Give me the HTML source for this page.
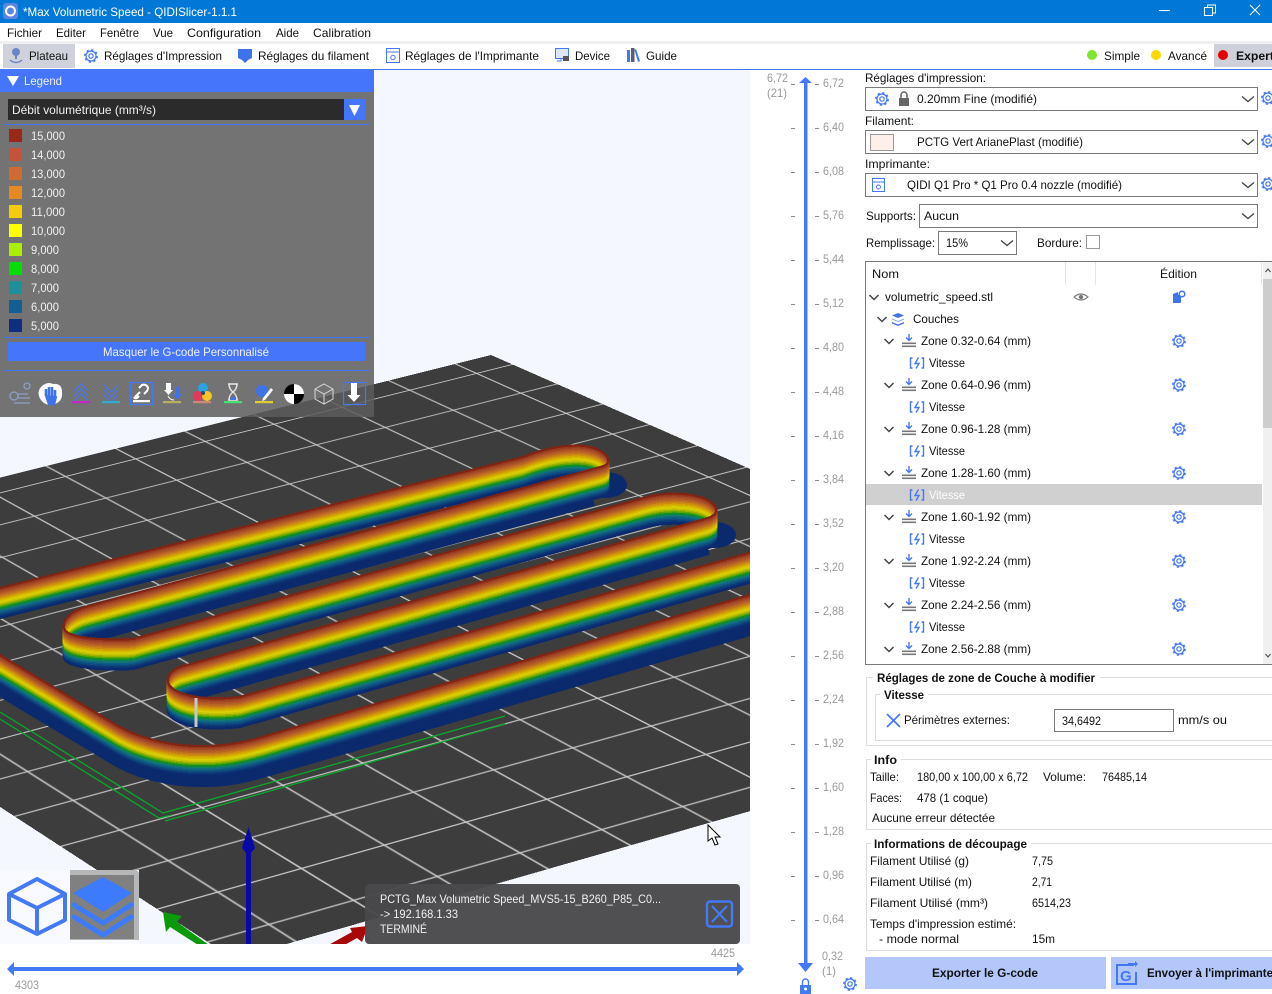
<!DOCTYPE html>
<html lang="fr"><head><meta charset="utf-8"><title>Max Volumetric Speed - QIDISlicer</title>
<style>
html,body{margin:0;padding:0;background:#fff;width:1272px;height:994px;overflow:hidden}
#scene{position:absolute;left:0;top:70px;width:750px;height:874px;overflow:hidden;background:#f4f7fe}
#bed{position:absolute;left:0;top:-70px;width:1000px;height:1000px;transform-origin:0 0;
transform:matrix3d(.5273,.2088,0,-.00016603,-.8363,.1819,0,-.00005645,0,0,1,0,491,355,0,1);
background-color:#3d3d3d;
background-image:linear-gradient(90deg,#cacaca 1.8px,transparent 1.8px),linear-gradient(#cacaca 1.8px,transparent 1.8px);
background-size:71.43px 81.6px;background-position:34px 43px}
svg#m{position:absolute;left:0;top:0}
text{font-family:"Liberation Sans",sans-serif;font-size:12px;fill:#111}
.b{font-weight:bold}.w{fill:#f0f0f0}.g{fill:#9a9a9a}
</style></head><body>
<div id="scene"><div id="bed"></div></div>
<svg id="m" width="1272" height="994" viewBox="0 0 1272 994" xmlns="http://www.w3.org/2000/svg">
<defs>
<clipPath id="cv"><rect x="0" y="70" width="750" height="874"/></clipPath>
<path id="w" fill="none" stroke-width="2.2" d="M-20,593 L523,457 C543,449 565,444 585,446 C600,448 610,456 608,462 C607,466 600,467 593,469 L85,607 C70,612 62,620 64,628 C66,636 90,641 133,639 L647,497 C670,491 700,493 712,503 C720,510 716,515 708,518 L180,667 C170,671 167,677 168,682 C170,692 195,702 240,697 L770,547 M-20,643 L113,723 C135,737 170,747 205,746 C225,746 245,742 262,737 L770,589"/>
<g id="g" fill="none" stroke="#4479f5"><circle r="5" stroke-width="1.2"/><circle r="2.2" stroke-width="1.2"/><circle r="6" stroke-width="1.8" stroke-dasharray="2.2 2.51"/></g>
<g id="z"><path d="M0,-7V-1M-3,-3.5L0,-.5L3,-3.5" stroke="#4479f5" stroke-width="1.4" fill="none"/><rect x="-7" y="1.5" width="14" height="1.6" fill="#777"/><rect x="-7" y="4.5" width="14" height="1.6" fill="#777"/></g>
<g id="v" fill="none" stroke="#4479f5" stroke-width="1.4"><path d="M-4.5,-5H-6.5V5H-4.5M4.5,-5H6.5V5H4.5"/><path d="M1.5,-5.5L-2,.5H2L-1,5.5"/></g>
<path id="c" d="M-4.5,-2L0,2.5L4.5,-2" fill="none" stroke="#444" stroke-width="1.5"/>
<path id="d" d="M-6,-2.5L0,2.5L6,-2.5" fill="none" stroke="#444" stroke-width="1.4"/>
</defs>

<!-- title bar -->
<rect width="1272" height="23" fill="#0078d7"/>
<rect x="3" y="3" width="15" height="16" rx="3" fill="#5b86e0"/><circle cx="10.5" cy="11" r="4.5" fill="none" stroke="#fff" stroke-width="2"/>
<text x="23" y="16" textLength="214" lengthAdjust="spacingAndGlyphs" style="fill:#fff">*Max Volumetric Speed - QIDISlicer-1.1.1</text>
<path d="M1159,10.5H1170" stroke="#fff"/><path d="M1204.5,7.5h8v8h-8zM1207.5,7.5v-2.5h8v8h-3" fill="none" stroke="#fff"/><path d="M1250,5L1260,15M1260,5L1250,15" stroke="#fff" stroke-width="1.1"/>

<!-- menu -->
<g>
<text x="7" y="37" textLength="35" lengthAdjust="spacingAndGlyphs">Fichier</text>
<text x="56" y="37" textLength="30" lengthAdjust="spacingAndGlyphs">Editer</text>
<text x="100" y="37" textLength="39" lengthAdjust="spacingAndGlyphs">Fenêtre</text>
<text x="153" y="37" textLength="20" lengthAdjust="spacingAndGlyphs">Vue</text>
<text x="187" y="37" textLength="74" lengthAdjust="spacingAndGlyphs">Configuration</text>
<text x="276" y="37" textLength="23" lengthAdjust="spacingAndGlyphs">Aide</text>
<text x="313" y="37" textLength="58" lengthAdjust="spacingAndGlyphs">Calibration</text>
</g>
<rect x="0" y="41" width="1272" height="3" fill="#f0f0f0"/>

<!-- toolbar -->
<rect x="3" y="44" width="72" height="24" fill="#cfd2db"/>
<rect x="1214" y="44" width="58" height="23" fill="#cfd1da"/>
<rect x="0" y="69" width="1272" height="1" fill="#4479f5"/>
<g fill="#6b86c8"><circle cx="16" cy="52" r="4"/><path d="M10,60q6,5 12,0" fill="none" stroke="#6b86c8" stroke-width="1.4"/><rect x="15" y="54" width="2" height="5"/></g>
<use href="#g" x="91" y="56"/>
<path d="M238,49h14v9l-4,2l-3,3l-3,-3l-4,-2z" fill="#3f73ea"/>
<g fill="none" stroke="#4479f5"><rect x="386.5" y="48.5" width="13" height="14"/><path d="M386.5,52h13"/><circle cx="393" cy="57.5" r="2.2"/></g>
<g><rect x="555.5" y="48.5" width="13" height="10" fill="#dde6fb" stroke="#4479f5"/><path d="M561,59v2h-4" stroke="#4479f5" fill="none"/><rect x="563" y="56" width="6" height="5" fill="#555"/></g>
<g fill="#4479f5"><rect x="627" y="50" width="3" height="12"/><rect x="631" y="48" width="3.5" height="14" fill="#5a5f70"/><path d="M636,49l4,12l-2,1l-3.5,-12z"/></g>
<g>
<text x="29" y="60" textLength="39" lengthAdjust="spacingAndGlyphs">Plateau</text>
<text x="104" y="60" textLength="118" lengthAdjust="spacingAndGlyphs">Réglages d'Impression</text>
<text x="258" y="60" textLength="111" lengthAdjust="spacingAndGlyphs">Réglages du filament</text>
<text x="405" y="60" textLength="134" lengthAdjust="spacingAndGlyphs">Réglages de l'Imprimante</text>
<text x="575" y="60" textLength="35" lengthAdjust="spacingAndGlyphs">Device</text>
<text x="646" y="60" textLength="31" lengthAdjust="spacingAndGlyphs">Guide</text>
<text x="1104" y="60" textLength="36" lengthAdjust="spacingAndGlyphs">Simple</text>
<text x="1168" y="60" textLength="39" lengthAdjust="spacingAndGlyphs">Avancé</text>
<text x="1236" y="60" class="b" textLength="38" lengthAdjust="spacingAndGlyphs">Expert</text>
</g>
<circle cx="1092" cy="55" r="5" fill="#7fe62d"/><circle cx="1156" cy="55" r="5" fill="#ffd800"/><circle cx="1223" cy="55" r="5" fill="#e60000"/>

<!-- 3D scene -->
<g clip-path="url(#cv)">
<g fill="none" stroke="#0aa82a" stroke-width="1.3">
<path d="M0,712L163,813L505,716"/><path d="M0,719L159,818L172,815"/><path d="M165,821L505,724"/>
</g>
<g fill="#0b2a6e"><ellipse cx="606" cy="485" rx="21" ry="13"/><ellipse cx="715" cy="535" rx="21" ry="13"/></g>
<g fill="none" stroke="#0b2a6e" stroke-width="14">
<path d="M593,499L85,637"/><path d="M708,548L180,697"/>
<path d="M-20,677 L113,757 C135,771 170,781 205,780 C225,780 245,776 262,771 L770,623"/>
</g>
<g shape-rendering="crispEdges">
<use href="#w" y="30" stroke="#0b2a6e"/><use href="#w" y="28.5" stroke="#0b2c70"/><use href="#w" y="27" stroke="#0c3a78"/><use href="#w" y="25.5" stroke="#0e4c80"/><use href="#w" y="24" stroke="#0f5c82"/><use href="#w" y="22.5" stroke="#117080"/><use href="#w" y="21" stroke="#0f8058"/><use href="#w" y="19.5" stroke="#109020"/><use href="#w" y="18" stroke="#5aa408"/><use href="#w" y="16.5" stroke="#9cb400"/><use href="#w" y="15" stroke="#c8c400"/><use href="#w" y="13.5" stroke="#d8d000"/><use href="#w" y="12" stroke="#d8bc00"/><use href="#w" y="10.5" stroke="#d4a400"/><use href="#w" y="9" stroke="#cc8c10"/><use href="#w" y="7.5" stroke="#c4761c"/><use href="#w" y="6" stroke="#b86424"/><use href="#w" y="4.5" stroke="#ae5628"/><use href="#w" y="3" stroke="#a44828"/><use href="#w" y="1.5" stroke="#983a20"/><use href="#w" y="0" stroke="#802414"/>
</g>
<rect x="194.5" y="698" width="3" height="29" fill="#c8c8c8"/>
<path d="M246,850h5v94h-5z M248.5,827L255,848L251,853H246L242,848Z" fill="#0808a8"/>
<path d="M163,912L182,916L177,922L216,950L206,950L170,927L166,932Z" fill="#0a9a0a"/>
<path d="M323,948L352,932L350,928L368,926L362,942L357,938L332,952Z" fill="#a80808"/>
<path d="M708,825V841L712,838L715,845L718,844L715,837L720,837Z" fill="#fff" stroke="#000" stroke-width="1"/>

<!-- bottom-left view icons -->
<rect x="0" y="870" width="139" height="74" fill="#f8faff"/>
<path d="M70,870h65a4,4 0 0 1 4,4v66h-69z" fill="#a0a0a0" opacity=".75"/>
<rect x="70" y="875" width="64" height="64" fill="#808080"/>
<path d="M37,879L65,894V920L37,934L9,920V894ZM9,894L37,908L65,894M37,908V934" fill="none" stroke="#4479f5" stroke-width="4" stroke-linejoin="round"/>
<path d="M103,877L132,893L103,912L73,893Z" fill="#3b7bfc"/>
<path d="M74,905L103,923L131,905" fill="none" stroke="#3b7bfc" stroke-width="5" stroke-linecap="round" stroke-linejoin="round"/>
<path d="M74,917L103,935L131,917" fill="none" stroke="#3b7bfc" stroke-width="5" stroke-linecap="round" stroke-linejoin="round"/>

<!-- tooltip -->
<rect x="365" y="884" width="375" height="60" rx="4" fill="#49494c" fill-opacity=".96"/>
<text x="380" y="903" class="w" textLength="281" lengthAdjust="spacingAndGlyphs">PCTG_Max Volumetric Speed_MVS5-15_B260_P85_C0...</text>
<text x="380" y="918" class="w" textLength="78" lengthAdjust="spacingAndGlyphs">-&gt; 192.168.1.33</text>
<text x="380" y="933" class="w" textLength="47" lengthAdjust="spacingAndGlyphs">TERMINÉ</text>
<rect x="707" y="901.5" width="25" height="25" rx="3" fill="none" stroke="#4479f5" stroke-width="2.4"/>
<path d="M712,906L727,922M727,906L712,922" stroke="#4479f5" stroke-width="2.2"/>
</g>

<!-- Legend panel -->
<rect x="0" y="70" width="374" height="347" fill="#5c5c5c" fill-opacity=".85"/>
<rect x="0" y="70" width="374" height="22" fill="#4575fb"/>
<path d="M7,76H19L13,86Z" fill="#fff"/>
<text x="24" y="85" class="w" textLength="38" lengthAdjust="spacingAndGlyphs">Legend</text>
<rect x="8" y="99" width="357" height="21" fill="#2b2b2b"/>
<rect x="344" y="99" width="21" height="21" fill="#4575fb"/>
<path d="M349,105H360L354.500,116Z" fill="#fff"/>
<text x="12" y="114" class="w" textLength="144" lengthAdjust="spacingAndGlyphs">Débit volumétrique (mm³/s)</text>
<rect x="4" y="124" width="366" height="1" fill="#4575fb"/>
<g>
<rect x="9" y="129" width="13" height="13" fill="#98281a"/><rect x="9" y="148" width="13" height="13" fill="#c3533b"/><rect x="9" y="167" width="13" height="13" fill="#cf6b30"/><rect x="9" y="186" width="13" height="13" fill="#e58a20"/><rect x="9" y="205" width="13" height="13" fill="#f5cc0a"/><rect x="9" y="224" width="13" height="13" fill="#ffff00"/><rect x="9" y="243" width="13" height="13" fill="#aaf000"/><rect x="9" y="262" width="13" height="13" fill="#06dc06"/><rect x="9" y="281" width="13" height="13" fill="#1f8f9a"/><rect x="9" y="300" width="13" height="13" fill="#135f93"/><rect x="9" y="319" width="13" height="13" fill="#0f2e80"/>
</g>
<g>
<text x="31" y="140" class="w" textLength="34" lengthAdjust="spacingAndGlyphs">15,000</text>
<text x="31" y="159" class="w" textLength="34" lengthAdjust="spacingAndGlyphs">14,000</text>
<text x="31" y="178" class="w" textLength="34" lengthAdjust="spacingAndGlyphs">13,000</text>
<text x="31" y="197" class="w" textLength="34" lengthAdjust="spacingAndGlyphs">12,000</text>
<text x="31" y="216" class="w" textLength="34" lengthAdjust="spacingAndGlyphs">11,000</text>
<text x="31" y="235" class="w" textLength="34" lengthAdjust="spacingAndGlyphs">10,000</text>
<text x="31" y="254" class="w" textLength="28" lengthAdjust="spacingAndGlyphs">9,000</text>
<text x="31" y="273" class="w" textLength="28" lengthAdjust="spacingAndGlyphs">8,000</text>
<text x="31" y="292" class="w" textLength="28" lengthAdjust="spacingAndGlyphs">7,000</text>
<text x="31" y="311" class="w" textLength="28" lengthAdjust="spacingAndGlyphs">6,000</text>
<text x="31" y="330" class="w" textLength="28" lengthAdjust="spacingAndGlyphs">5,000</text>
</g>
<rect x="4" y="337" width="366" height="1" fill="#4575fb"/>
<rect x="8" y="342" width="357" height="19" fill="#4575fb"/>
<text x="103" y="356" class="w" textLength="166" lengthAdjust="spacingAndGlyphs">Masquer le G-code Personnalisé</text>
<rect x="4" y="370" width="366" height="1" fill="#4575fb"/>

<!-- legend toolbar icons -->
<g>
<g fill="none" stroke="#8d9fc8" stroke-width="1.3"><circle cx="14" cy="396" r="4"/><circle cx="27" cy="386" r="3"/><path d="M18,394h10M18,398h12M14,403h16"/></g>
<path d="M41,387q6,-6 12,-3q9,-1 9,8q1,9 -7,12q-9,3 -14,-4q-5,-7 0,-13z" fill="#fff"/><path d="M46,389v7M49,387v10M52,387v10M55,390v7M46,395l3,9h5l2,-8" stroke="#3f73ea" stroke-width="2.6" fill="#3f73ea"/>
<path d="M74,391l7,-7l7,7M74,396l7,-7l7,7M74,401l7,-7l7,7" fill="none" stroke="#4479f5" stroke-width="1.2"/><rect x="72" y="401" width="18" height="2.200" fill="#c22bc8"/>
<path d="M104,385l7,7l7,-7M104,390l7,7l7,-7M104,395l7,7l7,-7" fill="none" stroke="#4479f5" stroke-width="1.2"/><rect x="102" y="401" width="18" height="2.200" fill="#33aacc"/>
<rect x="130.500" y="382.500" width="22" height="22" fill="none" stroke="#4479f5" stroke-width="1.2"/><path d="M135,397l5,-5M139,388l3,-3q3,-1 5,1q2,2 0,5l-3,3M139,396l-2,2q-2,1 -3,-1" fill="none" stroke="#fff" stroke-width="2"/><rect x="133" y="400" width="17" height="2.200" fill="#fff"/>
<path d="M166,383h5v7h2l-4.500,5l-4.500,-5h2z" fill="#fff"/><path d="M175,387h5v7h2l-4.500,6l-4.500,-6h2z" fill="#3f73ea"/><path d="M168,396q2,4 6,4" stroke="#fff" fill="none"/><rect x="163" y="401" width="18" height="2.200" fill="#b8b060"/>
<circle cx="203" cy="388" r="5" fill="#2aa3e0"/><circle cx="198" cy="396" r="5" fill="#e8385a"/><circle cx="207" cy="396" r="5" fill="#f7c52a"/><circle cx="203" cy="393" r="2" fill="#24506a"/><rect x="193" y="401" width="18" height="2.200" fill="#d08878"/>
<path d="M228,384h10M228,400h10M229,384q0,5 4,8q-4,3 -4,8M237,384q0,5 -4,8q4,3 4,8" fill="none" stroke="#e8e8e8" stroke-width="1.400"/><path d="M231,397h4l1,3h-6z" fill="#3f73ea"/><rect x="224" y="401" width="18" height="2.200" fill="#46e070"/>
<circle cx="262" cy="391" r="6" fill="#3f73ea"/><path d="M263,398l8,-10l2,2l-8,10l-3,1z" fill="#fff"/><rect x="255" y="401" width="18" height="2.200" fill="#e0cc30"/>
<circle cx="294" cy="394" r="10" fill="#000"/><path d="M294,384a10,10 0 0 1 10,10h-10zM294,394h-10a10,10 0 0 0 10,10z" fill="#fff"/>
<path d="M324,384l9,5v10l-9,5l-9,-5v-10zM315,389l9,5l9,-5M324,394v10" fill="none" stroke="#d8d8d8" stroke-width="1"/>
<rect x="343.500" y="382.500" width="22" height="22" fill="none" stroke="#4479f5" stroke-width="1.200"/><path d="M351,383h6v12h3.500l-6.500,7l-6.500,-7h3.500z" fill="#fff"/>
</g>

<!-- timeline -->
<rect x="9" y="967" width="733" height="4" fill="#4479f5"/>
<path d="M14,962V976L7,969ZM737,962V976L744,969Z" fill="#4479f5"/>
<text x="711" y="957" class="g" textLength="24" lengthAdjust="spacingAndGlyphs">4425</text>
<text x="15" y="989" class="g" textLength="24" lengthAdjust="spacingAndGlyphs">4303</text>

<!-- vertical slider -->
<rect x="804" y="80" width="3.500" height="888" fill="#4479f5"/>
<path d="M805.500,77L812,83H799Z" fill="#4479f5"/>
<path d="M798,963H813L805.500,972Z" fill="#4479f5"/>
<path d="M800,985h11v9h-11z" fill="#4479f5"/><path d="M802.500,985v-3a3,3 0 0 1 6,0v3" fill="none" stroke="#4479f5" stroke-width="1.400"/><circle cx="805.500" cy="989" r="1.500" fill="#fff"/>
<use href="#g" x="850" y="984"/>
<g fill="#8a8a8a">
<rect x="791" y="84" width="4" height="1"/><rect x="791" y="128" width="4" height="1"/><rect x="791" y="172" width="4" height="1"/><rect x="791" y="216" width="4" height="1"/><rect x="791" y="260" width="4" height="1"/><rect x="791" y="304" width="4" height="1"/><rect x="791" y="348" width="4" height="1"/><rect x="791" y="392" width="4" height="1"/><rect x="791" y="436" width="4" height="1"/><rect x="791" y="480" width="4" height="1"/><rect x="791" y="524" width="4" height="1"/><rect x="791" y="568" width="4" height="1"/><rect x="791" y="612" width="4" height="1"/><rect x="791" y="656" width="4" height="1"/><rect x="791" y="700" width="4" height="1"/><rect x="791" y="744" width="4" height="1"/><rect x="791" y="788" width="4" height="1"/><rect x="791" y="832" width="4" height="1"/><rect x="791" y="876" width="4" height="1"/><rect x="791" y="920" width="4" height="1"/>
<rect x="815" y="84" width="4" height="1"/><rect x="815" y="128" width="4" height="1"/><rect x="815" y="172" width="4" height="1"/><rect x="815" y="216" width="4" height="1"/><rect x="815" y="260" width="4" height="1"/><rect x="815" y="304" width="4" height="1"/><rect x="815" y="348" width="4" height="1"/><rect x="815" y="392" width="4" height="1"/><rect x="815" y="436" width="4" height="1"/><rect x="815" y="480" width="4" height="1"/><rect x="815" y="524" width="4" height="1"/><rect x="815" y="568" width="4" height="1"/><rect x="815" y="612" width="4" height="1"/><rect x="815" y="656" width="4" height="1"/><rect x="815" y="700" width="4" height="1"/><rect x="815" y="744" width="4" height="1"/><rect x="815" y="788" width="4" height="1"/><rect x="815" y="832" width="4" height="1"/><rect x="815" y="876" width="4" height="1"/><rect x="815" y="920" width="4" height="1"/>
</g>
<g>
<text x="767" y="82" class="g" textLength="21" lengthAdjust="spacingAndGlyphs">6,72</text>
<text x="767" y="97" class="g" textLength="20" lengthAdjust="spacingAndGlyphs">(21)</text>
<text x="823" y="87" class="g" textLength="21" lengthAdjust="spacingAndGlyphs">6,72</text>
<text x="823" y="131" class="g" textLength="21" lengthAdjust="spacingAndGlyphs">6,40</text>
<text x="823" y="175" class="g" textLength="21" lengthAdjust="spacingAndGlyphs">6,08</text>
<text x="823" y="219" class="g" textLength="21" lengthAdjust="spacingAndGlyphs">5,76</text>
<text x="823" y="263" class="g" textLength="21" lengthAdjust="spacingAndGlyphs">5,44</text>
<text x="823" y="307" class="g" textLength="21" lengthAdjust="spacingAndGlyphs">5,12</text>
<text x="823" y="351" class="g" textLength="21" lengthAdjust="spacingAndGlyphs">4,80</text>
<text x="823" y="395" class="g" textLength="21" lengthAdjust="spacingAndGlyphs">4,48</text>
<text x="823" y="439" class="g" textLength="21" lengthAdjust="spacingAndGlyphs">4,16</text>
<text x="823" y="483" class="g" textLength="21" lengthAdjust="spacingAndGlyphs">3,84</text>
<text x="823" y="527" class="g" textLength="21" lengthAdjust="spacingAndGlyphs">3,52</text>
<text x="823" y="571" class="g" textLength="21" lengthAdjust="spacingAndGlyphs">3,20</text>
<text x="823" y="615" class="g" textLength="21" lengthAdjust="spacingAndGlyphs">2,88</text>
<text x="823" y="659" class="g" textLength="21" lengthAdjust="spacingAndGlyphs">2,56</text>
<text x="823" y="703" class="g" textLength="21" lengthAdjust="spacingAndGlyphs">2,24</text>
<text x="823" y="747" class="g" textLength="21" lengthAdjust="spacingAndGlyphs">1,92</text>
<text x="823" y="791" class="g" textLength="21" lengthAdjust="spacingAndGlyphs">1,60</text>
<text x="823" y="835" class="g" textLength="21" lengthAdjust="spacingAndGlyphs">1,28</text>
<text x="823" y="879" class="g" textLength="21" lengthAdjust="spacingAndGlyphs">0,96</text>
<text x="823" y="923" class="g" textLength="21" lengthAdjust="spacingAndGlyphs">0,64</text>
<text x="822" y="960" class="g" textLength="21" lengthAdjust="spacingAndGlyphs">0,32</text>
<text x="822" y="975" class="g" textLength="14" lengthAdjust="spacingAndGlyphs">(1)</text>
</g>

<!-- right panel -->
<g fill="#fff" stroke="#7a7a7a">
<rect x="865.500" y="87.500" width="392" height="23"/>
<rect x="865.500" y="130.500" width="392" height="23"/>
<rect x="865.500" y="173.500" width="392" height="23"/>
<rect x="919.500" y="204.500" width="338" height="23"/>
<rect x="938.500" y="231.500" width="78" height="23"/>
<rect x="1086.500" y="235.500" width="13" height="13" stroke="#999"/>
<rect x="870.500" y="134.500" width="23" height="16" fill="#fdf0ea" stroke="#999"/>
</g>
<text x="865" y="82" textLength="121" lengthAdjust="spacingAndGlyphs">Réglages d'impression:</text>
<use href="#g" x="882" y="99"/>
<rect x="899" y="98" width="10" height="8" fill="#666"/><path d="M901,98v-3a3,3 0 0 1 6,0v3" fill="none" stroke="#666" stroke-width="1.500"/>
<text x="917" y="103" textLength="120" lengthAdjust="spacingAndGlyphs">0.20mm Fine (modifié)</text>
<text x="865" y="125" textLength="49" lengthAdjust="spacingAndGlyphs">Filament:</text>
<text x="917" y="146" textLength="166" lengthAdjust="spacingAndGlyphs">PCTG Vert ArianePlast (modifié)</text>
<text x="865" y="168" textLength="65" lengthAdjust="spacingAndGlyphs">Imprimante:</text>
<g fill="none" stroke="#4479f5"><rect x="872.500" y="178.500" width="12" height="13"/><path d="M872.500,182h12"/><circle cx="878.500" cy="187" r="2"/></g>
<text x="907" y="189" textLength="215" lengthAdjust="spacingAndGlyphs">QIDI Q1 Pro * Q1 Pro 0.4 nozzle (modifié)</text>
<use href="#g" x="1268" y="98"/><use href="#g" x="1268" y="141"/><use href="#g" x="1268" y="184"/>
<use href="#d" x="1248" y="99"/><use href="#d" x="1248" y="142"/><use href="#d" x="1248" y="185"/><use href="#d" x="1248" y="216"/><use href="#d" x="1007" y="243"/>
<text x="866" y="220" textLength="50" lengthAdjust="spacingAndGlyphs">Supports:</text>
<text x="924" y="220" textLength="35" lengthAdjust="spacingAndGlyphs">Aucun</text>
<text x="866" y="247" textLength="69" lengthAdjust="spacingAndGlyphs">Remplissage:</text>
<text x="946" y="247" textLength="22" lengthAdjust="spacingAndGlyphs">15%</text>
<text x="1037" y="247" textLength="45" lengthAdjust="spacingAndGlyphs">Bordure:</text>

<!-- tree -->
<path d="M865.500,665V261.500H1272M865.500,664.500H1272" fill="none" stroke="#7a7a7a"/>
<path d="M1065.500,262V285M1095.500,262V285M1261.500,262V285" stroke="#e4e4e4"/>
<rect x="1263" y="262" width="9" height="402" fill="#f0f0f0"/>
<rect x="1263" y="279" width="9" height="149" fill="#cdcdcd"/>
<path d="M1265.500,272l2.500,-3l2.500,3M1265.500,654l2.500,3l2.500,-3" fill="none" stroke="#555" stroke-width="1.200"/>
<text x="872" y="278" textLength="27" lengthAdjust="spacingAndGlyphs">Nom</text>
<text x="1160" y="278" textLength="37" lengthAdjust="spacingAndGlyphs">Édition</text>
<rect x="866" y="484" width="396" height="21" fill="#d0d0d0"/>
<use href="#c" x="874" y="297"/>
<text x="885" y="301" textLength="108" lengthAdjust="spacingAndGlyphs">volumetric_speed.stl</text>
<path d="M1074,297q7,-6 14,0q-7,6 -14,0z" fill="none" stroke="#777" stroke-width="1.100"/><circle cx="1081" cy="297" r="2.200" fill="#777"/>
<path d="M1173,294l5,-2v3h3v7a1,1 0 0 1 -1,1h-7z" fill="#3f73ea"/><circle cx="1182" cy="294" r="2.800" fill="#fff" stroke="#3f73ea" stroke-width="1.500"/>
<use href="#c" x="882" y="319"/>
<g fill="#3f73ea"><path d="M898,313l6,2.500l-6,2.500l-6,-2.500z"/><path d="M892,318.500l6,2.500l6,-2.500v1l-6,2.500l-6,-2.500z" fill="#7da0ef"/><path d="M892,322l6,2.500l6,-2.500v1.500l-6,2.500l-6,-2.500z"/></g>
<text x="913" y="323" textLength="46" lengthAdjust="spacingAndGlyphs">Couches</text>

<use href="#c" x="889" y="341"/><use href="#z" x="909" y="341"/><use href="#g" x="1179" y="341"/><text x="921" y="345" textLength="110" lengthAdjust="spacingAndGlyphs">Zone 0.32-0.64 (mm)</text>
<use href="#v" x="917" y="363"/><text x="929" y="367" textLength="36" lengthAdjust="spacingAndGlyphs">Vitesse</text>
<use href="#c" x="889" y="385"/><use href="#z" x="909" y="385"/><use href="#g" x="1179" y="385"/><text x="921" y="389" textLength="110" lengthAdjust="spacingAndGlyphs">Zone 0.64-0.96 (mm)</text>
<use href="#v" x="917" y="407"/><text x="929" y="411" textLength="36" lengthAdjust="spacingAndGlyphs">Vitesse</text>
<use href="#c" x="889" y="429"/><use href="#z" x="909" y="429"/><use href="#g" x="1179" y="429"/><text x="921" y="433" textLength="110" lengthAdjust="spacingAndGlyphs">Zone 0.96-1.28 (mm)</text>
<use href="#v" x="917" y="451"/><text x="929" y="455" textLength="36" lengthAdjust="spacingAndGlyphs">Vitesse</text>
<use href="#c" x="889" y="473"/><use href="#z" x="909" y="473"/><use href="#g" x="1179" y="473"/><text x="921" y="477" textLength="110" lengthAdjust="spacingAndGlyphs">Zone 1.28-1.60 (mm)</text>
<use href="#v" x="917" y="495"/><text x="929" y="499" textLength="36" lengthAdjust="spacingAndGlyphs" style="fill:#fff">Vitesse</text>
<use href="#c" x="889" y="517"/><use href="#z" x="909" y="517"/><use href="#g" x="1179" y="517"/><text x="921" y="521" textLength="110" lengthAdjust="spacingAndGlyphs">Zone 1.60-1.92 (mm)</text>
<use href="#v" x="917" y="539"/><text x="929" y="543" textLength="36" lengthAdjust="spacingAndGlyphs">Vitesse</text>
<use href="#c" x="889" y="561"/><use href="#z" x="909" y="561"/><use href="#g" x="1179" y="561"/><text x="921" y="565" textLength="110" lengthAdjust="spacingAndGlyphs">Zone 1.92-2.24 (mm)</text>
<use href="#v" x="917" y="583"/><text x="929" y="587" textLength="36" lengthAdjust="spacingAndGlyphs">Vitesse</text>
<use href="#c" x="889" y="605"/><use href="#z" x="909" y="605"/><use href="#g" x="1179" y="605"/><text x="921" y="609" textLength="110" lengthAdjust="spacingAndGlyphs">Zone 2.24-2.56 (mm)</text>
<use href="#v" x="917" y="627"/><text x="929" y="631" textLength="36" lengthAdjust="spacingAndGlyphs">Vitesse</text>
<use href="#c" x="889" y="649"/><use href="#z" x="909" y="649"/><use href="#g" x="1179" y="649"/><text x="921" y="653" textLength="110" lengthAdjust="spacingAndGlyphs">Zone 2.56-2.88 (mm)</text>

<!-- groups -->
<g fill="none" stroke="#dcdcdc">
<path d="M873,677.500H866.500V745.500H1272M1100,677.500H1272"/>
<path d="M880,694.500H875.500V740.500H1272M928,694.500H1272"/>
<path d="M871,759.500H866.500V829.500H1272M901,759.500H1272"/>
<path d="M871,843.500H866.500V950.500H1272M1031,843.500H1272"/>
</g>
<text x="877" y="682" class="b" textLength="218" lengthAdjust="spacingAndGlyphs">Réglages de zone de Couche à modifier</text>
<text x="884" y="699" class="b" textLength="40" lengthAdjust="spacingAndGlyphs">Vitesse</text>
<path d="M887,714L900,727M900,714L887,727" stroke="#4479f5" stroke-width="1.700"/>
<text x="904" y="724" textLength="106" lengthAdjust="spacingAndGlyphs">Périmètres externes:</text>
<rect x="1054.500" y="709.500" width="119" height="22" fill="#fff" stroke="#7a7a7a"/>
<text x="1062" y="725" textLength="39" lengthAdjust="spacingAndGlyphs">34,6492</text>
<text x="1178" y="724" textLength="49" lengthAdjust="spacingAndGlyphs">mm/s ou</text>
<text x="874" y="764" class="b" textLength="23" lengthAdjust="spacingAndGlyphs">Info</text>
<text x="870" y="781" textLength="29" lengthAdjust="spacingAndGlyphs">Taille:</text>
<text x="917" y="781" textLength="111" lengthAdjust="spacingAndGlyphs">180,00 x 100,00 x 6,72</text>
<text x="1043" y="781" textLength="43" lengthAdjust="spacingAndGlyphs">Volume:</text>
<text x="1102" y="781" textLength="45" lengthAdjust="spacingAndGlyphs">76485,14</text>
<text x="870" y="802" textLength="32" lengthAdjust="spacingAndGlyphs">Faces:</text>
<text x="917" y="802" textLength="71" lengthAdjust="spacingAndGlyphs">478 (1 coque)</text>
<text x="872" y="822" textLength="123" lengthAdjust="spacingAndGlyphs">Aucune erreur détectée</text>
<text x="874" y="848" class="b" textLength="153" lengthAdjust="spacingAndGlyphs">Informations de découpage</text>
<text x="870" y="865" textLength="99" lengthAdjust="spacingAndGlyphs">Filament Utilisé (g)</text><text x="1032" y="865" textLength="21" lengthAdjust="spacingAndGlyphs">7,75</text>
<text x="870" y="886" textLength="102" lengthAdjust="spacingAndGlyphs">Filament Utilisé (m)</text><text x="1032" y="886" textLength="20" lengthAdjust="spacingAndGlyphs">2,71</text>
<text x="870" y="907" textLength="118" lengthAdjust="spacingAndGlyphs">Filament Utilisé (mm³)</text><text x="1032" y="907" textLength="39" lengthAdjust="spacingAndGlyphs">6514,23</text>
<text x="870" y="928" textLength="146" lengthAdjust="spacingAndGlyphs">Temps d'impression estimé:</text>
<text x="879" y="943" textLength="80" lengthAdjust="spacingAndGlyphs">- mode normal</text><text x="1032" y="943" textLength="23" lengthAdjust="spacingAndGlyphs">15m</text>

<!-- action buttons -->
<rect x="865" y="957" width="241" height="32" fill="#b3c7fb"/>
<rect x="1111" y="957" width="161" height="32" fill="#b3c7fb"/>
<text x="932" y="977" class="b" textLength="106" lengthAdjust="spacingAndGlyphs">Exporter le G-code</text>
<path d="M1134,965h-17v19h19v-12" fill="none" stroke="#4479f5" stroke-width="2"/><path d="M1128,963h7v-2l3,3l-3,3v-2h-7z" fill="#4479f5"/>
<text x="1120" y="981" class="b" style="fill:#4479f5;font-size:15px">G</text>
<text x="1147" y="977" class="b" textLength="126" lengthAdjust="spacingAndGlyphs">Envoyer à l'imprimante</text>
</svg>
</body></html>
